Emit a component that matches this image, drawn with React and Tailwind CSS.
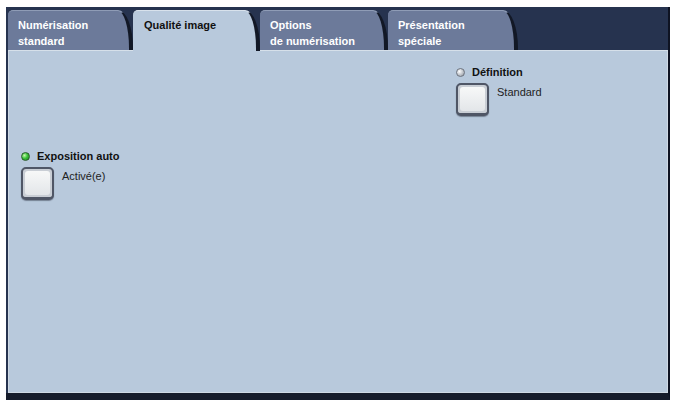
import React from "react";

function Tab({ label1, label2, active, w }) {
  const base =
    "relative h-[40px] shrink-0 rounded-tl-[5px] rounded-tr-[15px_38px] border-t border-r-[4px] border-r-[#121826] pt-[6px] text-[11px] font-bold leading-[16px]";
  if (active) {
    return (
      <div
        className={`${base} z-10 -mb-px h-[41px] border-t-[#d8e2ec] bg-[#b8c9dc] pl-[11px] text-[#111111]`}
        style={{ width: w }}
      >
        <div>{label1}</div>
        {label2 && <div>{label2}</div>}
      </div>
    );
  }
  return (
    <div
      className={`${base} border-t-[#8f9cb6] bg-[#6c7a9a] pl-[10px] text-white`}
      style={{ width: w }}
    >
      <div>{label1}</div>
      {label2 && <div>{label2}</div>}
    </div>
  );
}

function Button() {
  return (
    <div className="h-[33px] w-[33px] shrink-0 rounded-[5px] border-2 border-b-[3px] border-[#4f5666] bg-[#c9ced5] p-[2px] shadow-[0_1px_1px_rgba(20,25,40,0.4)]">
      <div className="h-full w-full rounded-[3px] bg-gradient-to-b from-[#f7f8f8] to-[#e3e6e9]" />
    </div>
  );
}

function Option({ title, value, dot }) {
  return (
    <div className="flex flex-col">
      <div className="flex h-[14px] items-center">
        {dot === "green" ? (
          <div className="h-[9px] w-[9px] rounded-full border border-[#2b5d2b] bg-[radial-gradient(circle_at_35%_35%,#c8f8b0_0%,#3cc43c_45%,#1b7d1b_100%)]" />
        ) : (
          <div className="h-[9px] w-[9px] rounded-full border border-[#6d737e] bg-[radial-gradient(circle_at_35%_35%,#ffffff_0%,#c4c8ce_50%,#8c929c_100%)]" />
        )}
        <span className="ml-[7px] text-[11px] font-bold leading-[14px] text-[#111111]">
          {title}
        </span>
      </div>
      <div className="mt-[4px] flex items-start">
        <Button />
        <span className="ml-[8px] mt-[2px] text-[11px] leading-[14px] text-[#222222]">
          {value}
        </span>
      </div>
    </div>
  );
}

export default function App() {
  return (
    <div className="h-[404px] w-[676px] overflow-hidden bg-white pl-[6px] pt-[7px] font-[Liberation_Sans,Arial,sans-serif]">
      <div className="flex h-[393px] w-[664px] flex-col border-b-[7px] border-r-2 border-b-[#161c2b] border-r-[#0e1322] bg-[#26334f] pl-[2px] pt-[3px]">
        <div className="flex h-[40px] shrink-0 items-start">
          <Tab label1="Numérisation" label2="standard" w={125} />
          <Tab label1="Qualité image" active w={127} />
          <Tab label1="Options" label2="de numérisation" w={128} />
          <Tab label1="Présentation" label2="spéciale" w={130} />
        </div>
        <div className="flex-1 border border-[#cfd9e4] border-t-[#d6e0ea] bg-[#b8c9dc] pl-[12px] pt-[14px]">
          <div className="ml-[435px]">
            <Option title="Définition" value="Standard" dot="gray" />
          </div>
          <div className="mt-[33px]">
            <Option title="Exposition auto" value="Activé(e)" dot="green" />
          </div>
        </div>
      </div>
    </div>
  );
}
